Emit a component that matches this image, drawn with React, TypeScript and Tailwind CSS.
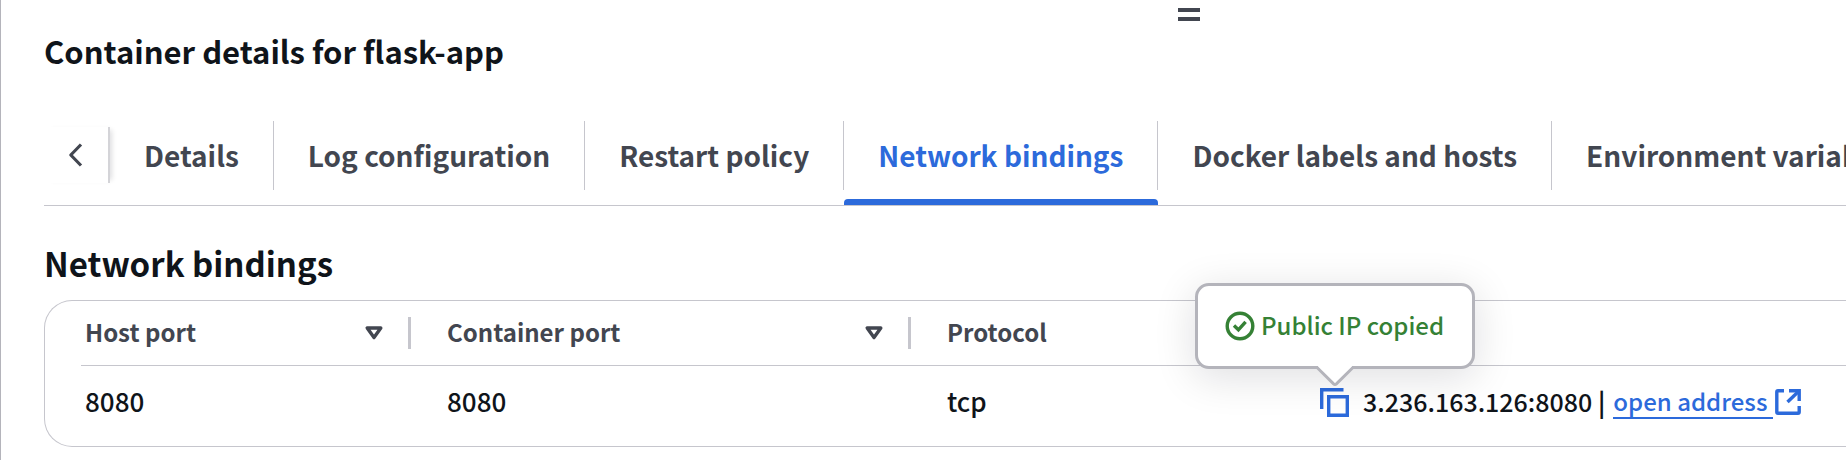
import React from "react";

const tabs = [
  "Details",
  "Log configuration",
  "Restart policy",
  "Network bindings",
  "Docker labels and hosts",
  "Environment variables and files",
];

const activeTab = "Network bindings";

function SortIcon() {
  return (
    <svg width="20" height="16" viewBox="0 0 20 16" fill="none" aria-hidden="true">
      <path d="M3.2 3h13.6L10 12.6z" stroke="#424650" strokeWidth="3.4" strokeLinejoin="round" />
    </svg>
  );
}

function HeaderCell({ label, sortable, first }: { label: string; sortable?: boolean; first?: boolean }) {
  return (
    <th scope="col" className="border-b border-[#c6c6cd] p-0 text-left text-2xl leading-8 font-bold text-[#424650]">
      <div className={first ? "flex h-16 items-center pl-1" : "flex h-16 items-center pl-9"}>
        <span className="flex-1 pb-[2px]">{label}</span>
        {sortable && (
          <button type="button" aria-label={`Sort by ${label}`} className="mr-6">
            <SortIcon />
          </button>
        )}
        {sortable && <span className="h-8 w-[3px] bg-[#c6c6cd]" />}
      </div>
    </th>
  );
}

function CopiedPopover() {
  return (
    <div
      role="status"
      className="absolute bottom-[48px] left-1/2 flex h-[86px] w-[280px] -translate-x-1/2 items-center justify-center gap-[6px] rounded-[14px] border-[3px] border-[#b4b4bb] bg-white text-2xl leading-8 whitespace-nowrap text-[#358135] shadow-[0_8px_40px_2px_rgba(0,7,22,0.12)]"
    >
      <svg width="30" height="30" viewBox="0 0 30 30" fill="none" stroke="currentColor" strokeWidth="3.4" aria-hidden="true">
        <circle cx="15" cy="15" r="12.8" />
        <path d="M9 14.6l4.4 4.2 7.2-8" />
      </svg>
      <span className="pb-[2px] font-medium">Public IP copied</span>
      <svg
        className="absolute top-[80px] left-1/2 -translate-x-1/2"
        width="38"
        height="21"
        viewBox="0 0 38 21"
        fill="none"
        aria-hidden="true"
      >
        <path d="M2 0h34v1L19 18 2 1z" fill="#fff" />
        <path d="M1 1.5L17.6 17.8q1.4 1.3 2.8 0L37 1.5" stroke="#b4b4bb" strokeWidth="3" />
      </svg>
    </div>
  );
}

export default function App() {
  return (
    <main className="overflow-hidden border-l border-[#b4b4bb] bg-white pb-[13px] pl-[43px] font-['Noto_Sans_CJK_SC','Noto_Sans',sans-serif] text-[#0f141a]">
      <div className="flex h-[30px] justify-center pt-2 pl-[487px]">
        <button type="button" aria-label="Resize panel" className="h-[13px] w-[22px]">
          <svg width="22" height="13" viewBox="0 0 22 13" aria-hidden="true">
            <path d="M0 0h22v4H0zM0 9h22v4H0z" fill="#424650" />
          </svg>
        </button>
      </div>
      <h1 className="text-[31px] leading-[42px] font-bold">Container details for flask-app</h1>

      <div className="mt-[49px] flex h-[85px] border-b border-[#c6c6cd]">
        <button
          type="button"
          aria-label="Scroll tabs left"
          className="mt-[6px] flex h-14 w-[66px] shrink-0 items-center border-r-2 border-[#d4d4d8] pl-6 shadow-[5px_0_5px_-3px_rgba(0,7,22,0.13)]"
        >
          <svg width="16" height="24" viewBox="0 0 16 24" fill="none" aria-hidden="true">
            <path d="M13 1.5L2.8 12 13 22.5" stroke="#424650" strokeWidth="3.2" strokeLinejoin="round" />
          </svg>
        </button>
        <div role="tablist" className="flex min-w-0 flex-1 overflow-hidden">
          {tabs.map((tab) => {
            const active = tab === activeTab;
            return (
              <button
                key={tab}
                type="button"
                role="tab"
                aria-selected={active}
                className={`flex h-[84px] shrink-0 flex-col justify-between text-[28px] leading-8 font-bold ${
                  active ? "text-[#2c6adb]" : "text-[#424650]"
                }`}
              >
                <span className="flex h-[69px] items-center border-r border-[#c6c6cd] px-[34px] pb-[2px] whitespace-nowrap">
                  {tab}
                </span>
                {active && <span className="h-[6px] w-full rounded-t bg-[#2c6adb]" />}
              </button>
            );
          })}
        </div>
      </div>

      <h2 className="mt-[35px] text-[33px] leading-[44px] font-bold">Network bindings</h2>

      <div className="mt-[15px] h-[147px] rounded-l-[28px] border-y border-l border-[#c6c6cd] pl-9">
        <table className="w-full table-fixed border-separate border-spacing-0">
          <colgroup>
            <col className="w-[330px]" />
            <col className="w-[500px]" />
            <col className="w-[373px]" />
            <col />
          </colgroup>
          <thead>
            <tr>
              <HeaderCell label="Host port" sortable first />
              <HeaderCell label="Container port" sortable />
              <HeaderCell label="Protocol" />
              <th scope="col" aria-label="Address" className="border-b border-[#c6c6cd] p-0" />
            </tr>
          </thead>
          <tbody>
            <tr className="h-[72px] text-[26px] leading-8 font-medium">
              <td className="p-0 pb-[2px] pl-1">8080</td>
              <td className="p-0 pb-[2px] pl-9">8080</td>
              <td className="p-0 pb-[2px] pl-9">tcp</td>
              <td className="p-0 pl-9">
                <div className="flex items-center whitespace-nowrap">
                  <div className="relative mr-[14px] flex">
                    <button type="button" aria-label="Copy public IP">
                      <svg width="29" height="29" viewBox="0 0 29 29" fill="none" stroke="#2c6adb" strokeWidth="3.4" aria-hidden="true">
                        <path d="M1.7 21V1.7H23.5" />
                        <path d="M8.7 8.7h18.6v18.6H8.7z" />
                      </svg>
                    </button>
                    <CopiedPopover />
                  </div>
                  <span className="pb-[2px] text-[25px]">
                    3.236.163.126:8080 <span className="font-bold">|</span>
                  </span>
                  <a href="#open-address" className="ml-2 flex items-center text-2xl leading-8 text-[#2c6adb]">
                    <span className="border-b-2 border-[#2c6adb] pr-[6px]">open address</span>
                    <svg className="ml-[2px]" width="26" height="26" viewBox="0 0 26 26" fill="none" stroke="currentColor" strokeWidth="3.4" aria-hidden="true">
                      <path d="M9 1.8H3Q1.8 1.8 1.8 3v20q0 1.2 1.2 1.2h20q1.2 0 1.2-1.2v-6" />
                      <path d="M14 1.8h10.2V12" />
                      <path d="M24 2L12.5 13" />
                    </svg>
                  </a>
                </div>
              </td>
            </tr>
          </tbody>
        </table>
      </div>
    </main>
  );
}
